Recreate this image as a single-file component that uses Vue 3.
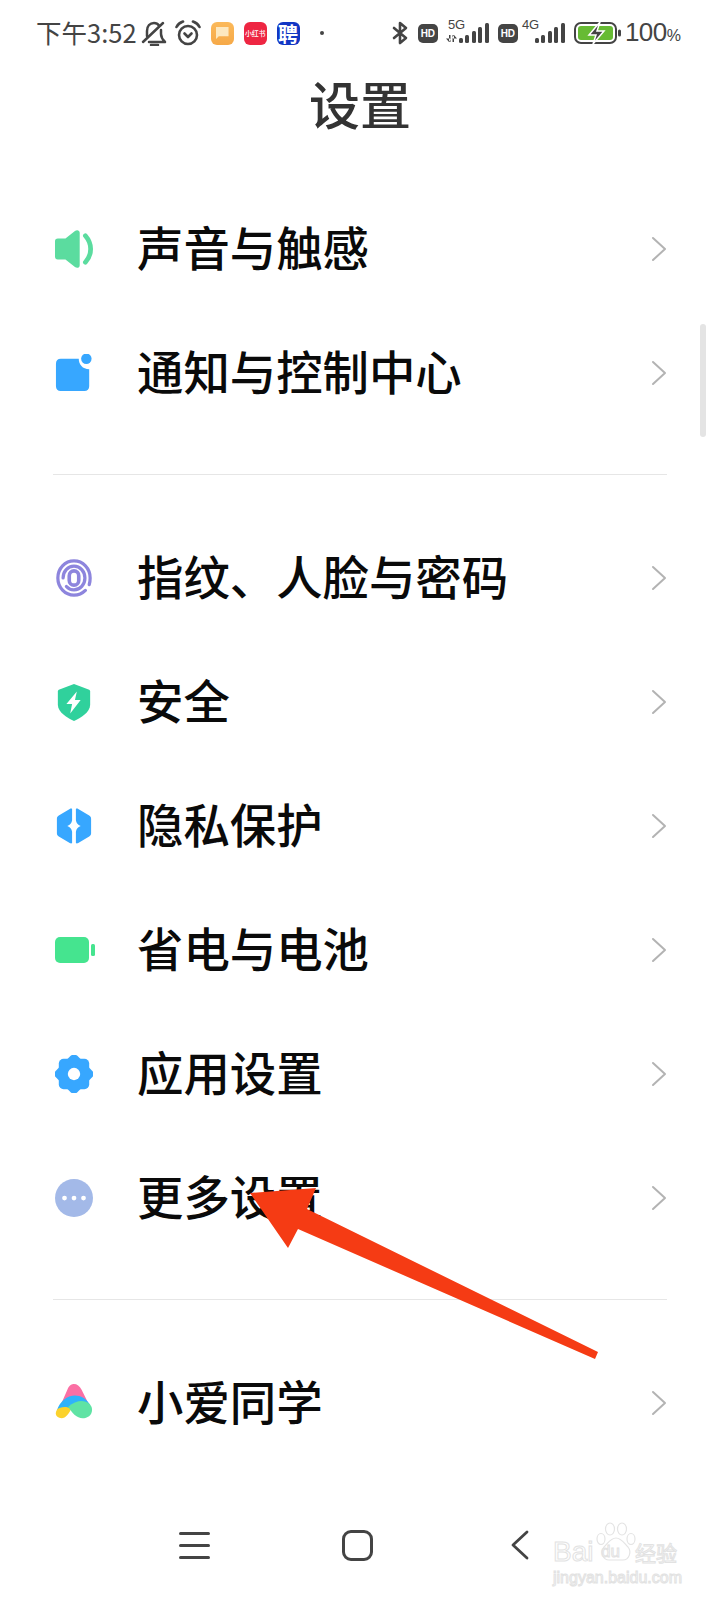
<template>
  <div class="page">
    <!-- Status bar -->
    <div class="status">
      <div class="st-left">
        <span class="st-time">下午3:52</span>
        <svg class="st-bell" width="26" height="26" viewBox="0 0 26 26" fill="none" stroke="#444" stroke-width="2.500" stroke-linecap="round" stroke-linejoin="round">
          <path d="M6 16v-5c0-5 3-8 7-8 2 0 4 1 5 2.500M20 10v4c0 3 2 6 4 8H8" />
          <path d="M2 22 22 3" />
          <path d="M10 25h7" />
        </svg>
        <svg class="st-alarm" width="26" height="26" viewBox="0 0 26 26" fill="none" stroke="#444" stroke-width="2.600" stroke-linecap="round" stroke-linejoin="round">
          <circle cx="13" cy="15" r="9" />
          <path d="M1.500 7C3 4 5 2.500 8 1.500M24.500 7C23 4 21 2.500 18 1.500" />
          <path d="M9.500 13.500 13 17l3.500-3.500" />
        </svg>
        <div class="app app-orange"><span class="app-note"></span></div>
        <div class="app app-red">小红书</div>
        <div class="app app-blue">聘</div>
        <span class="st-dot"></span>
      </div>
      <div class="st-right">
        <svg width="16" height="24" viewBox="0 0 16 24" fill="none" stroke="#444" stroke-width="2.600" stroke-linejoin="round" stroke-linecap="round">
          <path d="M2 7l12 10-6 5V2l6 5L2 17" />
        </svg>
        <span class="hd">HD</span>
        <div class="net">
          <span class="net-label">5G</span>
          <svg class="net-arrows" width="11" height="7" viewBox="0 0 11 7" fill="#444">
            <path d="M3 0h1.500v7H3zM5 3.500H0L3 7zM6.500 0H8v7H6.500zM6 3.500h5L8 0z" />
          </svg>
          <span class="bars"><i class="b1"></i><i class="b2"></i><i class="b3"></i><i class="b4"></i><i class="b5"></i></span>
        </div>
        <span class="hd">HD</span>
        <div class="net net-4g">
          <span class="net-label">4G</span>
          <span class="bars"><i class="b1"></i><i class="b2"></i><i class="b3"></i><i class="b4"></i><i class="b5"></i></span>
        </div>
        <svg class="st-batt" width="47" height="24" viewBox="0 0 47 24">
          <rect x="1" y="2" width="41" height="20" rx="6" fill="none" stroke="#444" stroke-width="2" />
          <rect x="4" y="5" width="35" height="14" rx="3" fill="#67bb34" />
          <rect x="44" y="8.500" width="3" height="7" rx="1.500" fill="#444" />
          <path d="M26 1 15 14h7l-3 9 11-13h-7z" fill="#444" stroke="#fff" stroke-width="1.500" />
        </svg>
        <span class="st-pct">100<small>%</small></span>
      </div>
    </div>

    <h1 class="title">设置</h1>

    <section v-for="(group, g) in groups" :key="g" class="group">
      <div v-for="item in group" :key="item.label" class="row">
        <span class="row-icon">
          <svg v-if="item.icon === 'sound'" width="38" height="38" viewBox="0 0 40 40">
            <path d="M0 12c0-2 1-3 3-3h8l10-8c2-1.500 5-1 5 2v34c0 3-3 3.500-5 2l-10-8H3c-2 0-3-1-3-3z" fill="#5bdc9f" />
            <path d="M32 6c3.500 4 5.500 9 5.500 14S35.500 30 32 34" fill="none" stroke="#5bdc9f" stroke-width="5" stroke-linecap="round" />
          </svg>
          <svg v-else-if="item.icon === 'notify'" width="38" height="38" viewBox="0 0 40 40">
            <path d="M6 5h19c0 6 4 11 11 11v18c0 3-2 5-5 5H6c-3 0-5-2-5-5V10c0-3 2-5 5-5z" fill="#37a7ff" />
            <circle cx="33" cy="5" r="5.500" fill="#37a7ff" />
          </svg>
          <svg v-else-if="item.icon === 'finger'" width="38" height="38" viewBox="0 0 40 40" fill="none" stroke="#8d85dd" stroke-width="3.400" stroke-linecap="round">
            <path d="M36 27c.7-2 1-4 1-7 0-10-7.500-18-17-18S3 10 3 20s7.500 18 17 18c5 0 9-2 12-5" />
            <path d="M8.500 20c0-7 5-12.500 11.500-12.500S31.500 13 31.500 20c0 7-5 12.500-11.500 12.500-3 0-6-1.200-8-3.500" />
            <rect x="15" y="12.500" width="10" height="15" rx="5" stroke-width="3.800" />
          </svg>
          <svg v-else-if="item.icon === 'shield'" width="38" height="38" viewBox="0 0 40 40">
            <path d="M20 1 36 7c.7.300 1 1 1 2v14c0 8-10 14-17 17-7-3-17-9-17-17V9c0-1 .3-1.700 1-2z" fill="#30d19c" />
            <path d="M23 9 12 22h6l-2 10 11-14h-6z" fill="#fff" />
          </svg>
          <svg v-else-if="item.icon === 'privacy'" width="38" height="38" viewBox="0 0 40 40">
            <path d="M18 2v12c-.5 3-2 5-5 6 3 1 4.500 3 5 6v12c-.5.500-1.500.500-2.500 0L4 31c-1.500-1-2-2-2-3.500v-15C2 11 2.500 10 4 9l11.500-7c1-.5 2-.5 2.500 0z" fill="#37a7ff" />
            <path d="M22 2v12c.5 3 2 5 5 6-3 1-4.500 3-5 6v12c.5.500 1.500.500 2.500 0L36 31c1.500-1 2-2 2-3.500v-15c0-1.500-.5-2.500-2-3.500L24.500 2c-1-.5-2-.5-2.500 0z" fill="#37a7ff" />
          </svg>
          <svg v-else-if="item.icon === 'battery'" width="40" height="38" viewBox="0 0 40 38">
            <rect x="0" y="6" width="34" height="26" rx="5" fill="#45e48f" />
            <rect x="36" y="13" width="4" height="12" rx="1.500" fill="#45e48f" />
          </svg>
          <svg v-else-if="item.icon === 'gear'" width="38" height="38" viewBox="0 0 40 40">
            <rect x="4" y="4" width="32" height="32" rx="5" fill="#37a7ff" />
            <rect x="4" y="4" width="32" height="32" rx="5" fill="#37a7ff" transform="rotate(45 20 20)" />
            <circle cx="20" cy="20" r="6.500" fill="#fff" />
          </svg>
          <svg v-else-if="item.icon === 'more'" width="38" height="38" viewBox="0 0 40 40">
            <circle cx="20" cy="20" r="20" fill="#a3b9e8" />
            <circle cx="10" cy="20" r="2.500" fill="#fff" />
            <circle cx="20" cy="20" r="2.500" fill="#fff" />
            <circle cx="30" cy="20" r="2.500" fill="#fff" />
          </svg>
          <svg v-else width="38" height="38" viewBox="0 0 40 40">
            <path d="M13 6c2-5 5-6 7-6 3 0 6 2 8 6l8 16H6z" fill="#fb6fa4" />
            <path d="M2 28c3-10 11-16 19-16 6 0 12 3 16 10l-9 8-12-4-8 8z" fill="#2fb2fb" />
            <path d="M2 27c3-3 10-4 15-1-2 5-6 10-10 10-5 0-8-4-5-9z" fill="#fbd22d" />
            <path d="M14 24c4-4 10-6 14-6 6 0 11 4 11 9 0 6-5 9-10 9-6 0-11-5-15-12z" fill="#5fe3a4" />
          </svg>
        </span>
        <span class="row-label">{{ item.label }}</span>
        <svg class="row-chev" width="16" height="26" viewBox="0 0 16 26" fill="none" stroke="#b3b3b3" stroke-width="2" stroke-linecap="round" stroke-linejoin="round">
          <path d="M2 2l12 11L2 24" />
        </svg>
      </div>
    </section>

    <!-- Nav bar -->
    <nav class="nav">
      <span class="nav-menu"><i></i><i></i><i></i></span>
      <span class="nav-home"></span>
      <svg class="nav-back" width="20" height="32" viewBox="0 0 20 32" fill="none" stroke="#444" stroke-width="2.800" stroke-linecap="round" stroke-linejoin="round">
        <path d="M17 3 3 16l14 13" />
      </svg>
    </nav>

    <span class="scrollbar"></span>

    <!-- Screenshot annotation -->
    <svg class="arrow" width="720" height="1600" viewBox="0 0 720 1600">
      <path d="M250 1193 316 1188 307 1209 598 1352 595 1359 298 1229 288 1248z" fill="#f53b14" />
    </svg>

    <div class="mark">
      <svg class="mark-paw" width="42" height="44" viewBox="0 0 42 44" fill="none" stroke="#e4e4e4" stroke-width="1.200">
        <ellipse cx="14" cy="7" rx="4.500" ry="6" />
        <ellipse cx="26" cy="7" rx="4.500" ry="6" />
        <ellipse cx="5" cy="17" rx="4" ry="5.500" />
        <ellipse cx="35" cy="17" rx="4" ry="5.500" />
        <path d="M20 16c5 0 8 5 12 9 4 5 1 13-5 13H13C7 38 4 30 8 25c4-4 7-9 12-9z" />
      </svg>
      <div class="mark-top">
        <span class="mark-bai">Bai</span>
        <span class="mark-du">du</span>
        <span class="mark-cn">经验</span>
      </div>
      <div class="mark-url">jingyan.baidu.com</div>
    </div>
  </div>
</template>

<script setup>
const groups = [
  [
    { label: '声音与触感', icon: 'sound' },
    { label: '通知与控制中心', icon: 'notify' },
  ],
  [
    { label: '指纹、人脸与密码', icon: 'finger' },
    { label: '安全', icon: 'shield' },
    { label: '隐私保护', icon: 'privacy' },
    { label: '省电与电池', icon: 'battery' },
    { label: '应用设置', icon: 'gear' },
    { label: '更多设置', icon: 'more' },
  ],
  [{ label: '小爱同学', icon: 'xiaoai' }],
]
</script>

<style>
body { background: #fff; }
</style>

<style scoped>
.page {
  position: relative;
  width: 720px;
  height: 1600px;
  overflow: hidden;
  background: #fff;
  font-family: "Noto Sans CJK SC", "Noto Sans", sans-serif;
}

.status {
  display: flex;
  justify-content: space-between;
  align-items: center;
  height: 66px;
  padding: 0 39px 0 36px;
  color: #444;
}
.st-left, .st-right {
  display: flex;
  align-items: center;
}
.st-time {
  font-size: 25.500px;
  line-height: 30px;
  margin-bottom: 2px;
  margin-right: 4px;
}
.st-alarm { margin-left: 8px; margin-right: 10px; }
.app {
  width: 23px;
  height: 23px;
  border-radius: 6px;
  margin-right: 10px;
  display: flex;
  align-items: center;
  justify-content: center;
  color: #fff;
}
.app-orange { background: linear-gradient(#fbb95a, #f6a948); }
.app-note {
  width: 13px;
  height: 13px;
  background: #fde8bf;
  clip-path: polygon(0 0, 100% 0, 100% 75%, 25% 75%, 0 100%);
}
.app-red { background: #ee2642; font-size: 7px; letter-spacing: -0.3px; white-space: nowrap; font-weight: 500; }
.app-blue { background: #1236c4; font-size: 20px; font-weight: 700; }
.st-dot {
  width: 4px;
  height: 4px;
  border-radius: 50%;
  background: #444;
  margin-left: 10px;
}
.hd {
  width: 20px;
  height: 19px;
  margin-left: 10px;
  background: #444;
  border-radius: 5px;
  color: #fff;
  font: 700 10px/19px "Liberation Sans", sans-serif;
  text-align: center;
}
.net {
  position: relative;
  box-sizing: border-box;
  width: 43px;
  height: 28px;
  margin-left: 8px;
  padding-bottom: 4px;
  display: flex;
  justify-content: flex-end;
  align-items: flex-end;
}
.net + .hd { margin-left: 9px; }
.net-4g { width: 45px; margin-left: 2px; }
.net-label {
  position: absolute;
  left: 2px;
  top: -1px;
  font: 13px/14px "Liberation Sans", sans-serif;
}
.net-arrows {
  position: absolute;
  left: 0;
  bottom: 5px;
}
.bars {
  display: flex;
  align-items: flex-end;
  gap: 2.500px;
  height: 20px;
}
.bars i {
  display: block;
  width: 4px;
  background: #444;
  border-radius: 1.500px;
}
.bars .b1 { height: 5px; }
.bars .b2 { height: 8px; }
.bars .b3 { height: 12px; }
.bars .b4 { height: 16px; }
.bars .b5 { height: 20px; }
.st-batt { margin-left: 9px; }
.st-pct {
  font: 26px/30px "Liberation Sans", sans-serif;
  letter-spacing: -0.500px;
  margin-left: 4px;
  margin-top: 2px;
}
.st-pct small { font-size: 16px; letter-spacing: 0; }

.title {
  margin: 0 0 47px;
  height: 74px;
  font-size: 51px;
  line-height: 74px;
  font-weight: 500;
  color: #333;
  text-align: center;
}

.group {
  padding-bottom: 39px;
  margin: 0 53px 41px;
  border-bottom: 1px solid #e6e6e6;
}
.group:last-of-type { border-bottom: 0; }

.row {
  display: flex;
  align-items: center;
  height: 124px;
}
.row-icon {
  box-sizing: border-box;
  width: 84px;
  padding-left: 2px;
  display: flex;
}
.row-label {
  flex: 1;
  font-size: 46.400px;
  line-height: 60px;
  margin-bottom: 6px;
  font-weight: 500;
  color: #0a0a0a;
}

.nav {
  position: absolute;
  left: 0;
  right: 0;
  bottom: 30px;
  height: 50px;
  display: flex;
  align-items: center;
}
.nav-menu {
  display: flex;
  flex-direction: column;
  justify-content: space-between;
  width: 31px;
  height: 27px;
  margin-left: 179px;
}
.nav-menu i {
  display: block;
  height: 3px;
  border-radius: 2px;
  background: #444;
}
.nav-home {
  width: 25px;
  height: 25px;
  margin-left: 132px;
  border: 3px solid #444;
  border-radius: 9px;
}
.nav-back { margin-left: 137px; }

.scrollbar {
  position: absolute;
  left: 700px;
  top: 324px;
  width: 6px;
  height: 113px;
  border-radius: 3px;
  background: #e4e4e4;
}

.arrow {
  position: absolute;
  left: 0;
  top: 0;
  pointer-events: none;
}

.mark {
  position: absolute;
  left: 553px;
  top: 1522px;
  width: 126px;
  font-family: "Liberation Sans", sans-serif;
  color: transparent;
  -webkit-text-stroke: 1px #e2e2e2;
}
.mark-paw {
  position: absolute;
  left: 43px;
  top: 0;
}
.mark-top {
  display: flex;
  align-items: center;
  height: 22px;
  margin-top: 19px;
  white-space: nowrap;
}
.mark-bai { font-size: 28px; line-height: 22px; width: 48px; }
.mark-du { font-size: 17px; line-height: 22px; width: 34px; }
.mark-cn { font: 21px/22px "Noto Sans CJK SC", sans-serif; }
.mark-url {
  margin-top: 6px;
  font-size: 16px;
  line-height: 18px;
  white-space: nowrap;
}
</style>
